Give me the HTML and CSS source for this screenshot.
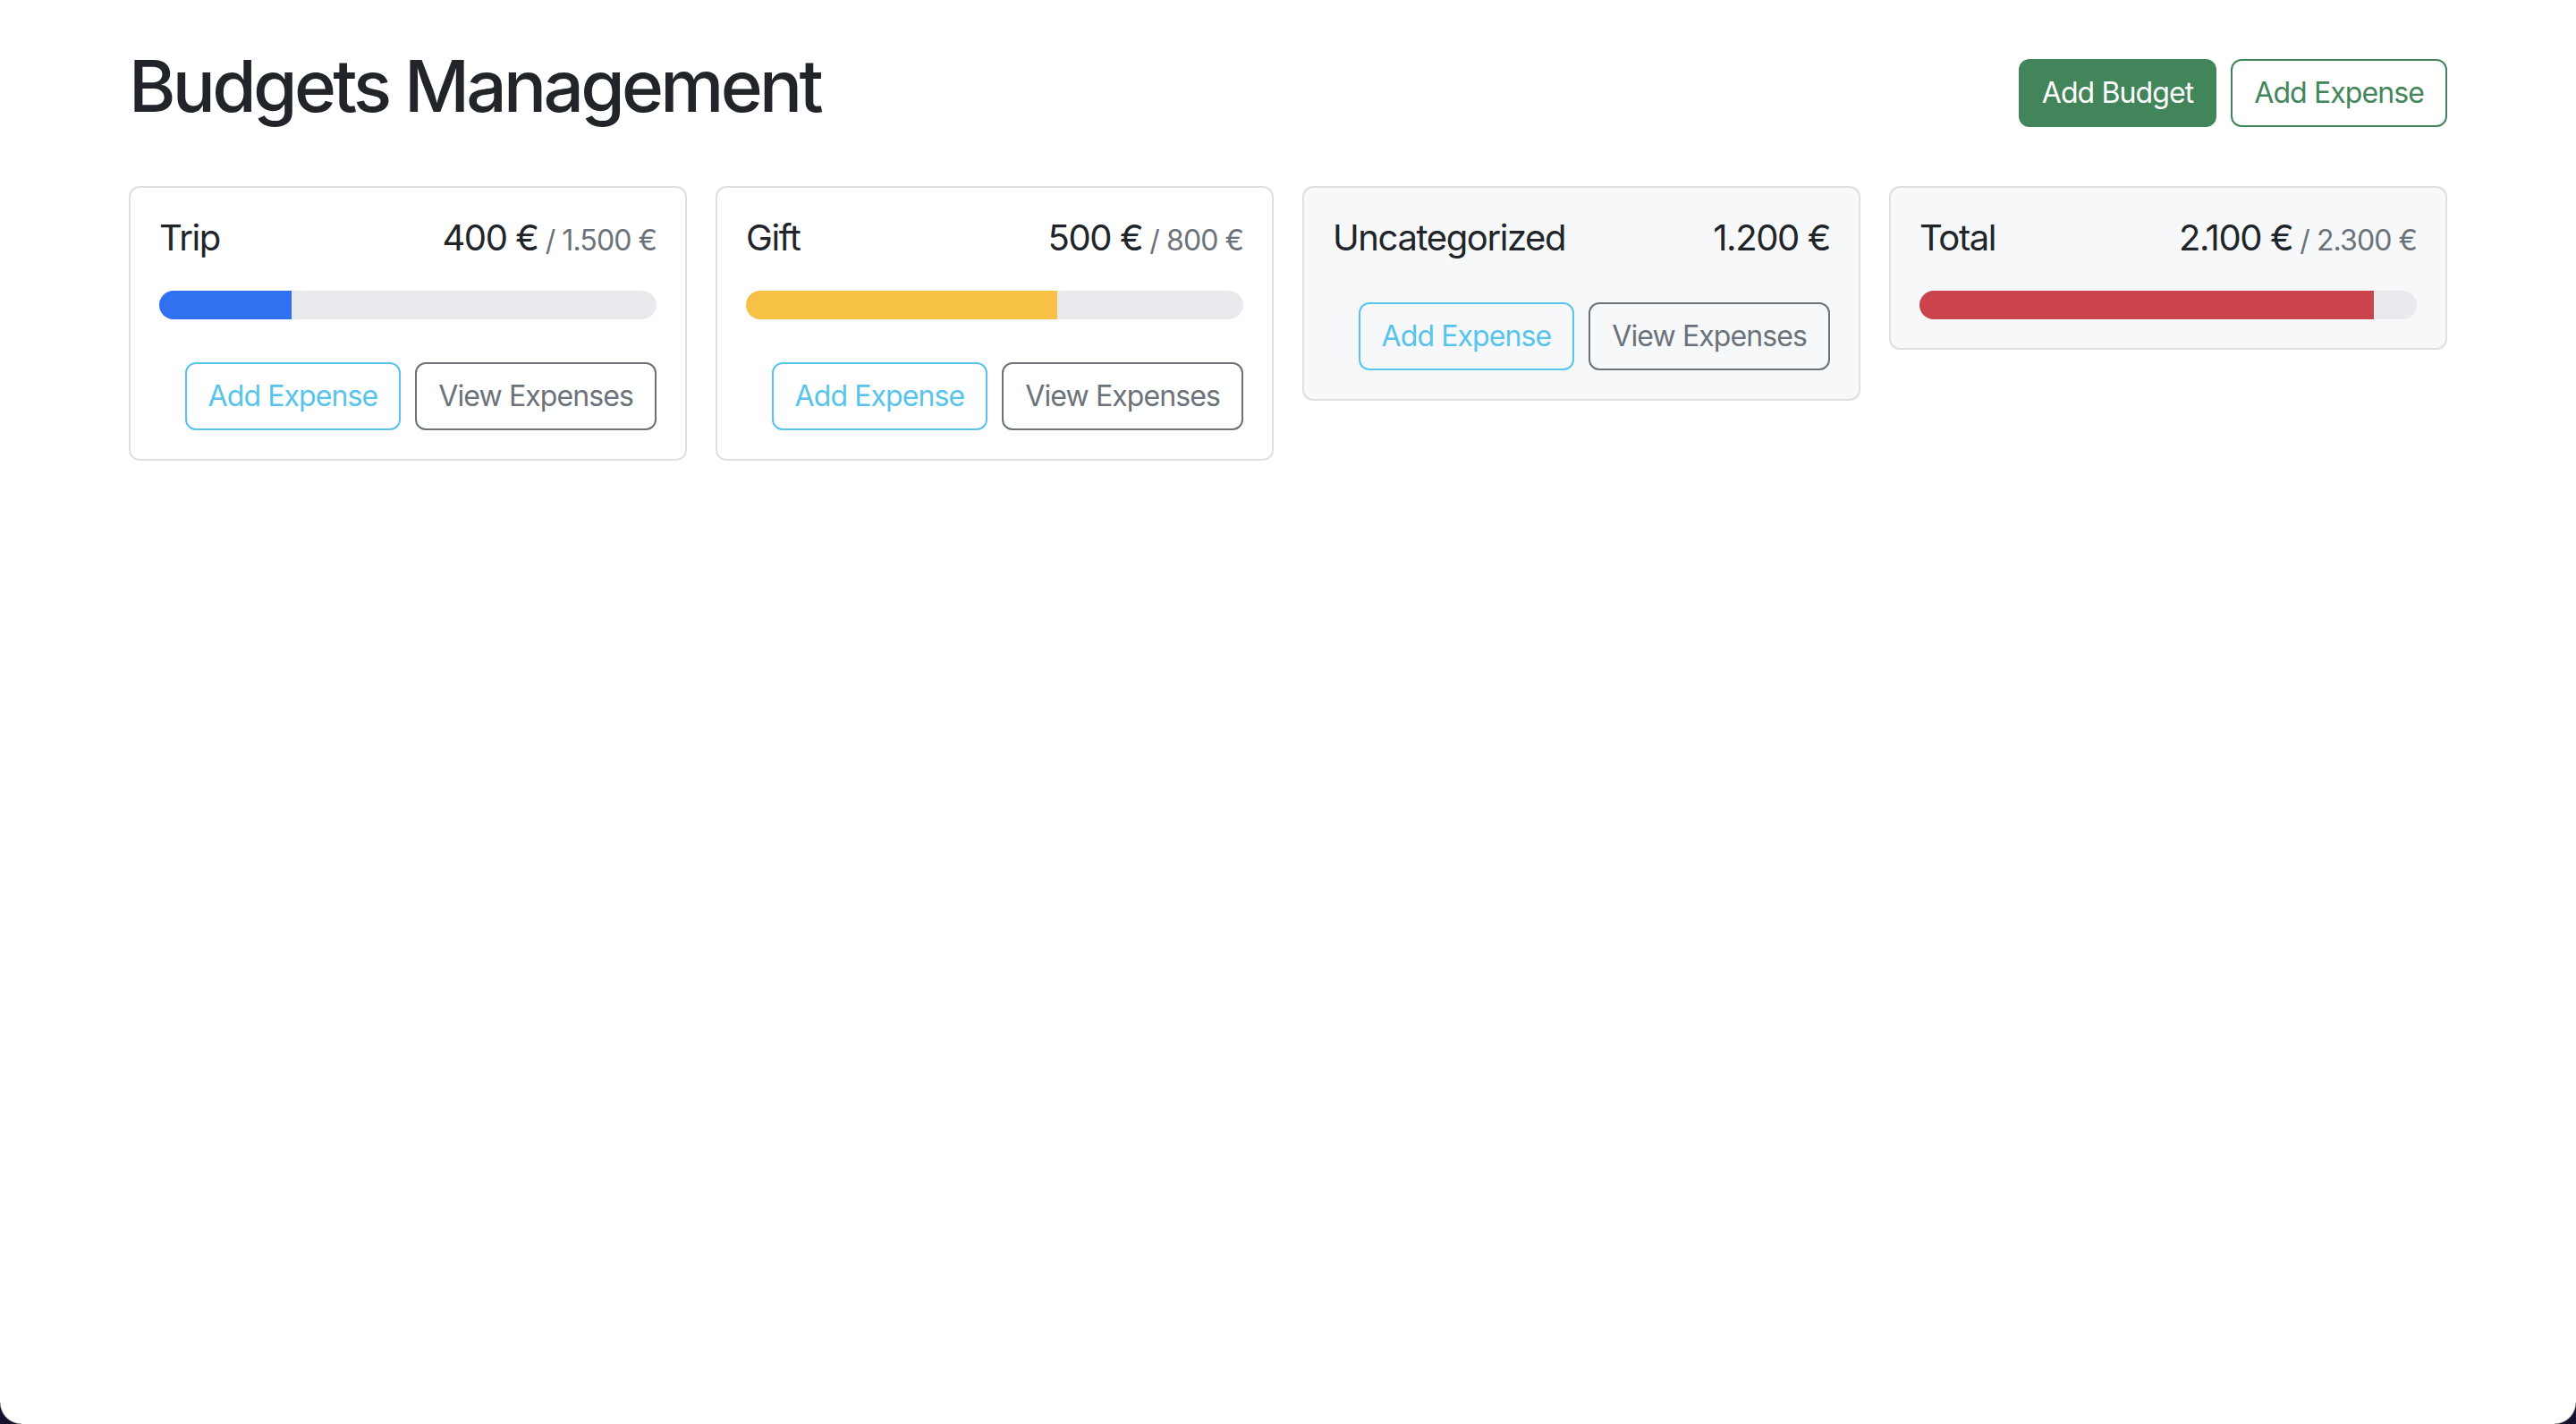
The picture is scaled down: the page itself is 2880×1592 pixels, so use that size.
FILE: index.html
```html
<!DOCTYPE html>
<html lang="en">
<head>
<meta charset="utf-8">
<title>Budgets Management</title>
<link rel="stylesheet" href="styles.css">
</head>
<body>
<div class="container">
  <div class="header">
    <h1 class="title">Budgets Management</h1>
    <button class="btn btn-success">Add Budget</button>
    <button class="btn btn-outline-success">Add Expense</button>
  </div>
  <div class="grid">
    <div class="card">
      <div class="card-body">
        <div class="card-title">
          <div class="name">Trip</div>
          <div class="amount">400 €<span class="max">/ 1.500 €</span></div>
        </div>
        <div class="progress"><div class="bar bar-primary" style="width: 26.67%"></div></div>
        <div class="actions">
          <button class="btn btn-outline-info">Add Expense</button>
          <button class="btn btn-outline-secondary">View Expenses</button>
        </div>
      </div>
    </div>
    <div class="card">
      <div class="card-body">
        <div class="card-title">
          <div class="name">Gift</div>
          <div class="amount">500 €<span class="max">/ 800 €</span></div>
        </div>
        <div class="progress"><div class="bar bar-warning" style="width: 62.5%"></div></div>
        <div class="actions">
          <button class="btn btn-outline-info">Add Expense</button>
          <button class="btn btn-outline-secondary">View Expenses</button>
        </div>
      </div>
    </div>
    <div class="card card-light">
      <div class="card-body">
        <div class="card-title">
          <div class="name">Uncategorized</div>
          <div class="amount">1.200 €</div>
        </div>
        <div class="actions">
          <button class="btn btn-outline-info">Add Expense</button>
          <button class="btn btn-outline-secondary">View Expenses</button>
        </div>
      </div>
    </div>
    <div class="card card-light">
      <div class="card-body">
        <div class="card-title">
          <div class="name">Total</div>
          <div class="amount">2.100 €<span class="max">/ 2.300 €</span></div>
        </div>
        <div class="progress"><div class="bar bar-danger" style="width: 91.3%"></div></div>
      </div>
    </div>
  </div>
</div>
<div class="corner corner-left"></div>
<div class="corner corner-right"></div>
</body>
</html>
```

FILE: styles.css
```css
* { box-sizing: border-box; }

html, body {
  margin: 0;
  background: #ffffff;
}

body {
  font-family: Inter, "Noto Sans", "Liberation Sans", sans-serif;
  font-size: 32px;
  line-height: 1.5;
  color: #212529;
  min-height: 1592px;
  letter-spacing: -0.9px;
}

.container {
  width: 2640px;
  margin: 48px auto;
  padding: 0 24px;
}

.header {
  display: flex;
  align-items: center;
  gap: 16px;
  margin-bottom: 48px;
}

.title {
  margin: 0 auto 16px 0;
  font-size: 80px;
  font-weight: 500;
  line-height: 1.2;
  letter-spacing: -3.7px;
}

.btn {
  font-family: inherit;
  font-size: 32px;
  line-height: 48px;
  letter-spacing: -0.9px;
  padding: 12px 24px;
  border: 2px solid transparent;
  border-radius: 12px;
  background: transparent;
  font-weight: 400;
  cursor: pointer;
}

.btn-success {
  background: #43855b;
  border-color: #43855b;
  color: #ffffff;
}

.btn-outline-success {
  color: #43855b;
  border-color: #43855b;
}

.btn-outline-info {
  color: #58c4ec;
  border-color: #58c4ec;
}

.btn-outline-secondary {
  color: #6b727a;
  border-color: #6b727a;
}

.grid {
  display: grid;
  grid-template-columns: repeat(4, 1fr);
  gap: 32px;
  align-items: start;
}

.card {
  border: 2px solid #dddfe1;
  border-radius: 12px;
  background: #ffffff;
}

.card-light {
  background: #f7f8fa;
}

.card-body {
  padding: 32px;
}

.card-title {
  display: flex;
  justify-content: space-between;
  align-items: baseline;
  font-size: 40px;
  line-height: 48px;
  letter-spacing: -1.4px;
  margin-bottom: 32px;
}

.name {
  margin-right: 16px;
}

.amount {
  display: flex;
  align-items: baseline;
}

.max {
  font-size: 32px;
  letter-spacing: -0.9px;
  color: #6b727a;
  margin-left: 8px;
}

.progress {
  height: 32px;
  background: #e9eaed;
  border-radius: 16px;
  overflow: hidden;
  display: flex;
}

.bar {
  height: 100%;
}

.bar-primary { background: #2f71f0; }
.bar-warning { background: #f6c145; }
.bar-danger { background: #cc444b; }

.actions {
  display: flex;
  justify-content: flex-end;
  gap: 16px;
  margin-top: 48px;
}

.corner {
  position: fixed;
  bottom: 0;
  width: 24px;
  height: 24px;
}

.corner-left {
  left: 0;
  background: radial-gradient(circle at 24px 0, transparent 23px, #14122e 24.5px);
}

.corner-right {
  right: 0;
  background: radial-gradient(circle at 0 0, transparent 23px, #14122e 24.5px);
}
```
